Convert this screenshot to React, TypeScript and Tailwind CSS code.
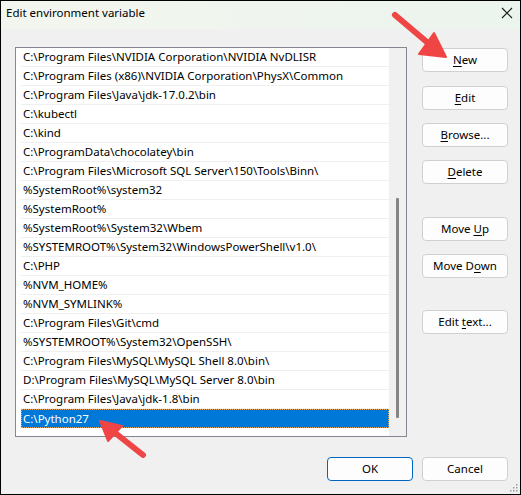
import React from "react";

const rows = [
  "C:\\Program Files\\NVIDIA Corporation\\NVIDIA NvDLISR",
  "C:\\Program Files (x86)\\NVIDIA Corporation\\PhysX\\Common",
  "C:\\Program Files\\Java\\jdk-17.0.2\\bin",
  "C:\\kubectl",
  "C:\\kind",
  "C:\\ProgramData\\chocolatey\\bin",
  "C:\\Program Files\\Microsoft SQL Server\\150\\Tools\\Binn\\",
  "%SystemRoot%\\system32",
  "%SystemRoot%",
  "%SystemRoot%\\System32\\Wbem",
  "%SYSTEMROOT%\\System32\\WindowsPowerShell\\v1.0\\",
  "C:\\PHP",
  "%NVM_HOME%",
  "%NVM_SYMLINK%",
  "C:\\Program Files\\Git\\cmd",
  "%SYSTEMROOT%\\System32\\OpenSSH\\",
  "C:\\Program Files\\MySQL\\MySQL Shell 8.0\\bin\\",
  "D:\\Program Files\\MySQL\\MySQL Server 8.0\\bin",
  "C:\\Program Files\\Java\\jdk-1.8\\bin",
  "C:\\Python27",
];

function Btn({
  pre,
  u,
  post,
  mt,
  primary,
}: {
  pre?: string;
  u?: string;
  post?: string;
  mt: string;
  primary?: boolean;
}) {
  return (
    <div
      className={`${mt} w-[86px] h-[24px] rounded-[4px] border ${
        primary ? "border-[#0067c0]" : "border-[#d0d0d0]"
      } bg-[#fdfdfd] flex items-center justify-center text-[11.5px] text-black leading-none`}
    >
      <span>
        {pre}
        {u ? <span className="underline underline-offset-2">{u}</span> : null}
        {post}
      </span>
    </div>
  );
}

export default function App() {
  return (
    <div
      className="relative w-[521px] h-[495px] border border-black bg-[#f0f0f0] flex flex-col overflow-hidden"
      style={{ fontFamily: '"Noto Sans", "Open Sans", Arial, sans-serif' }}
    >
      {/* Title bar */}
      <div className="h-[28px] bg-gradient-to-r from-[#f3f6ef] to-[#ebf4ed] flex items-center justify-between pl-[5px] pr-[7px] pb-[4px]">
        <span className="text-[11.5px] text-black">Edit environment variable</span>
        <svg width="12" height="12" viewBox="0 0 12 12">
          <path d="M1 1 L11 11 M11 1 L1 11" stroke="#1a1a1a" strokeWidth="1.1" />
        </svg>
      </div>

      {/* Body */}
      <div className="flex pl-[14px] pt-[18px]">
        {/* List box */}
        <div className="w-[392px] h-[390px] border border-[#828790] bg-white flex">
          <div className="w-[373px] flex flex-col">
            {rows.map((r, i) => {
              const sel = i === rows.length - 1;
              return (
                <div
                  key={i}
                  className={`ml-[5px] h-[19px] flex items-center pl-[2px] text-[11.5px] whitespace-nowrap ${
                    sel
                      ? "bg-[#0078d7] text-white outline-1 outline-dotted outline-[#e8a35a] -outline-offset-1"
                      : "text-black border-b border-[#f0f0f0]"
                  }`}
                >
                  {r}
                </div>
              );
            })}
          </div>
          <div className="w-[17px] bg-[#f0f0f0] flex justify-center">
            <div className="mt-[150px] w-[3px] h-[220px] bg-[#858585] rounded-[1px]" />
          </div>
        </div>

        {/* Buttons column */}
        <div className="ml-[15px] flex flex-col pt-[1px]">
          <Btn u="N" post="ew" mt="mt-0" />
          <Btn u="E" post="dit" mt="mt-[14px]" />
          <Btn u="B" post="rowse..." mt="mt-[13px]" />
          <Btn u="D" post="elete" mt="mt-[13px]" />
          <Btn pre="Move " u="U" post="p" mt="mt-[33px]" />
          <Btn pre="Move D" u="o" post="wn" mt="mt-[13px]" />
          <Btn pre="Edit " u="t" post="ext..." mt="mt-[32px]" />
        </div>
      </div>

      {/* Bottom buttons */}
      <div className="flex justify-end gap-[9px] pr-[12px] mt-[20px]">
        <Btn pre="OK" mt="mt-0" primary />
        <Btn pre="Cancel" mt="mt-0" />
      </div>

      {/* Resize grip */}
      <svg className="absolute right-[1px] bottom-[1px]" width="10" height="10" viewBox="0 0 10 10">
        <rect x="7" y="1" width="1.5" height="1.5" fill="#9a9a9a" />
        <rect x="4" y="4" width="1.5" height="1.5" fill="#9a9a9a" />
        <rect x="7" y="4" width="1.5" height="1.5" fill="#9a9a9a" />
        <rect x="1" y="7" width="1.5" height="1.5" fill="#9a9a9a" />
        <rect x="4" y="7" width="1.5" height="1.5" fill="#9a9a9a" />
        <rect x="7" y="7" width="1.5" height="1.5" fill="#9a9a9a" />
      </svg>

      {/* Annotation arrows */}
      <svg
        className="absolute left-[-1px] top-[-1px] pointer-events-none"
        width="521"
        height="495"
        viewBox="0 0 521 495"
      >
        <line x1="395" y1="15" x2="428" y2="43" stroke="#f04545" strokeWidth="6" strokeLinecap="round" />
        <polygon points="446,57 419,54 434,33" fill="#f04545" stroke="#f04545" strokeWidth="2" strokeLinejoin="round" />
        <line x1="143" y1="455" x2="114" y2="432" stroke="#f04545" strokeWidth="6" strokeLinecap="round" />
        <polygon points="100,421 108,441 122,426" fill="#f04545" stroke="#f04545" strokeWidth="2" strokeLinejoin="round" />
      </svg>
    </div>
  );
}
